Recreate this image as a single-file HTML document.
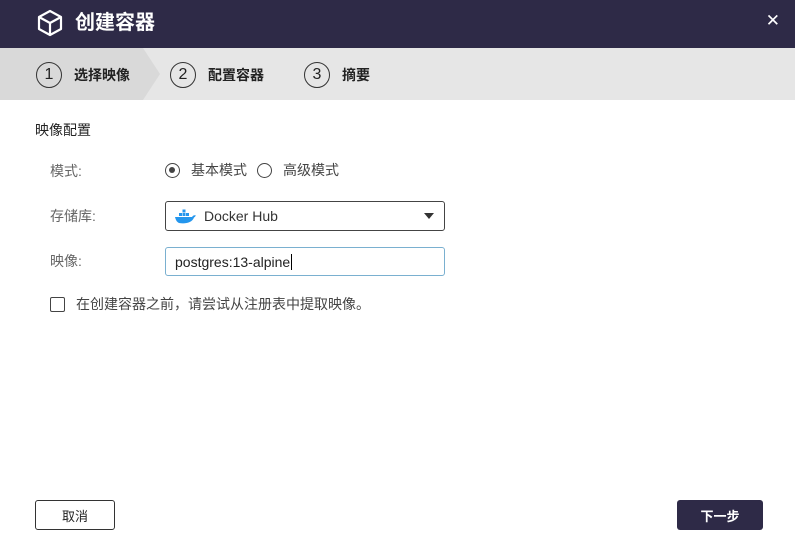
<!DOCTYPE html>
<html><head><meta charset="utf-8"><style>
*{box-sizing:border-box;margin:0;padding:0}
body{width:795px;height:552px;background:#fff;font-family:"Liberation Sans","Noto Sans CJK SC",sans-serif;position:relative;overflow:hidden;color:#333}
.hd{position:absolute;left:0;top:0;width:795px;height:48px;background:#2e2a47}
.hd .t{position:absolute;left:75px;top:9px;color:#fff;font-size:20px;font-weight:bold;line-height:28px}
.hd .x{position:absolute;right:15px;top:11px;color:#fff;font-size:17px}
.st{position:absolute;left:0;top:48px;width:795px;height:52px;background:#e6e6e6}
.st .a{position:absolute;left:0;top:0;height:52px;width:160px;background:#d9d9d9;clip-path:polygon(0 0,143px 0,160px 26px,143px 52px,0 52px)}
.s{position:absolute;top:14px;display:flex;align-items:center;font-size:14px;font-weight:bold;color:#222}
.s i{font-style:normal;width:26px;height:26px;border:1.5px solid #333;border-radius:50%;display:inline-flex;align-items:center;justify-content:center;font-weight:normal;font-size:16px;margin-right:12px}
.lab{position:absolute;font-size:14px;line-height:20px;color:#666}
.sel{position:absolute;left:165px;top:201px;width:280px;height:30px;border:1px solid #444;border-radius:3px;font-size:14px;padding:6px 0 0 38px;color:#333}
.inp{position:absolute;left:165px;top:247px;width:280px;height:29px;border:1px solid #7ab0d0;border-radius:3px;font-size:14px;padding:6px 0 0 9px;color:#222}
.btn{position:absolute;top:500px;height:30px;border-radius:3px;font-size:13px;display:flex;align-items:center;justify-content:center}
</style></head><body>
<div class="hd">
<svg style="position:absolute;left:36px;top:9px" width="28" height="28" viewBox="0 0 28 28" fill="none" stroke="#fff" stroke-width="2.2" stroke-linejoin="round"><path d="M14 2L25 8v12l-11 6L3 20V8z"/><path d="M3 8l11 6 11-6M14 14v12"/></svg>
<div class="t">创建容器</div><div class="x">✕</div></div>
<div class="st"><div class="a"></div>
<div class="s" style="left:36px"><i>1</i>选择映像</div>
<div class="s" style="left:170px"><i>2</i>配置容器</div>
<div class="s" style="left:304px"><i>3</i>摘要</div></div>
<div class="lab" style="left:35px;top:120px;color:#222">映像配置</div>
<div class="lab" style="left:50px;top:161px">模式:</div>
<div style="position:absolute;left:165px;top:163px;width:15px;height:15px;border:1.5px solid #444;border-radius:50%"><div style="position:absolute;left:3px;top:3px;width:6px;height:6px;background:#444;border-radius:50%"></div></div>
<div class="lab" style="left:191px;top:160px;color:#444">基本模式</div>
<div style="position:absolute;left:257px;top:163px;width:15px;height:15px;border:1.5px solid #444;border-radius:50%"></div>
<div class="lab" style="left:283px;top:160px;color:#444">高级模式</div>
<div class="lab" style="left:50px;top:206px">存储库:</div>
<div class="sel"><svg style="position:absolute;left:9px;top:7px" width="22" height="15" viewBox="0 0 22 15"><g fill="#2496ed"><rect x="4" y="4" width="3" height="3"/><rect x="7.5" y="4" width="3" height="3"/><rect x="11" y="4" width="3" height="3"/><rect x="7.5" y="0.5" width="3" height="3"/><path d="M0 8h17c1-2 3-2 4-1.5-1 1-1 1.5-2 2C17 14 10 15 4 14 1.5 13 0.5 10 0 8z"/></g></svg>Docker Hub
<div style="position:absolute;right:10px;top:11px;border:5px solid transparent;border-top:6px solid #333;border-bottom:0"></div></div>
<div class="lab" style="left:50px;top:251px">映像:</div>
<div class="inp">postgres:13-alpine<span style="border-left:1px solid #000;margin-left:1px"></span></div>
<div style="position:absolute;left:50px;top:297px;width:15px;height:15px;border:1.5px solid #444;border-radius:2px"></div>
<div class="lab" style="left:76px;top:294px;color:#444">在创建容器之前，请尝试从注册表中提取映像。</div>
<div class="btn" style="left:35px;width:80px;border:1px solid #333;color:#222">取消</div>
<div class="btn" style="left:677px;width:86px;background:#2e2a47;color:#fff;font-weight:bold">下一步</div>
</body></html>
